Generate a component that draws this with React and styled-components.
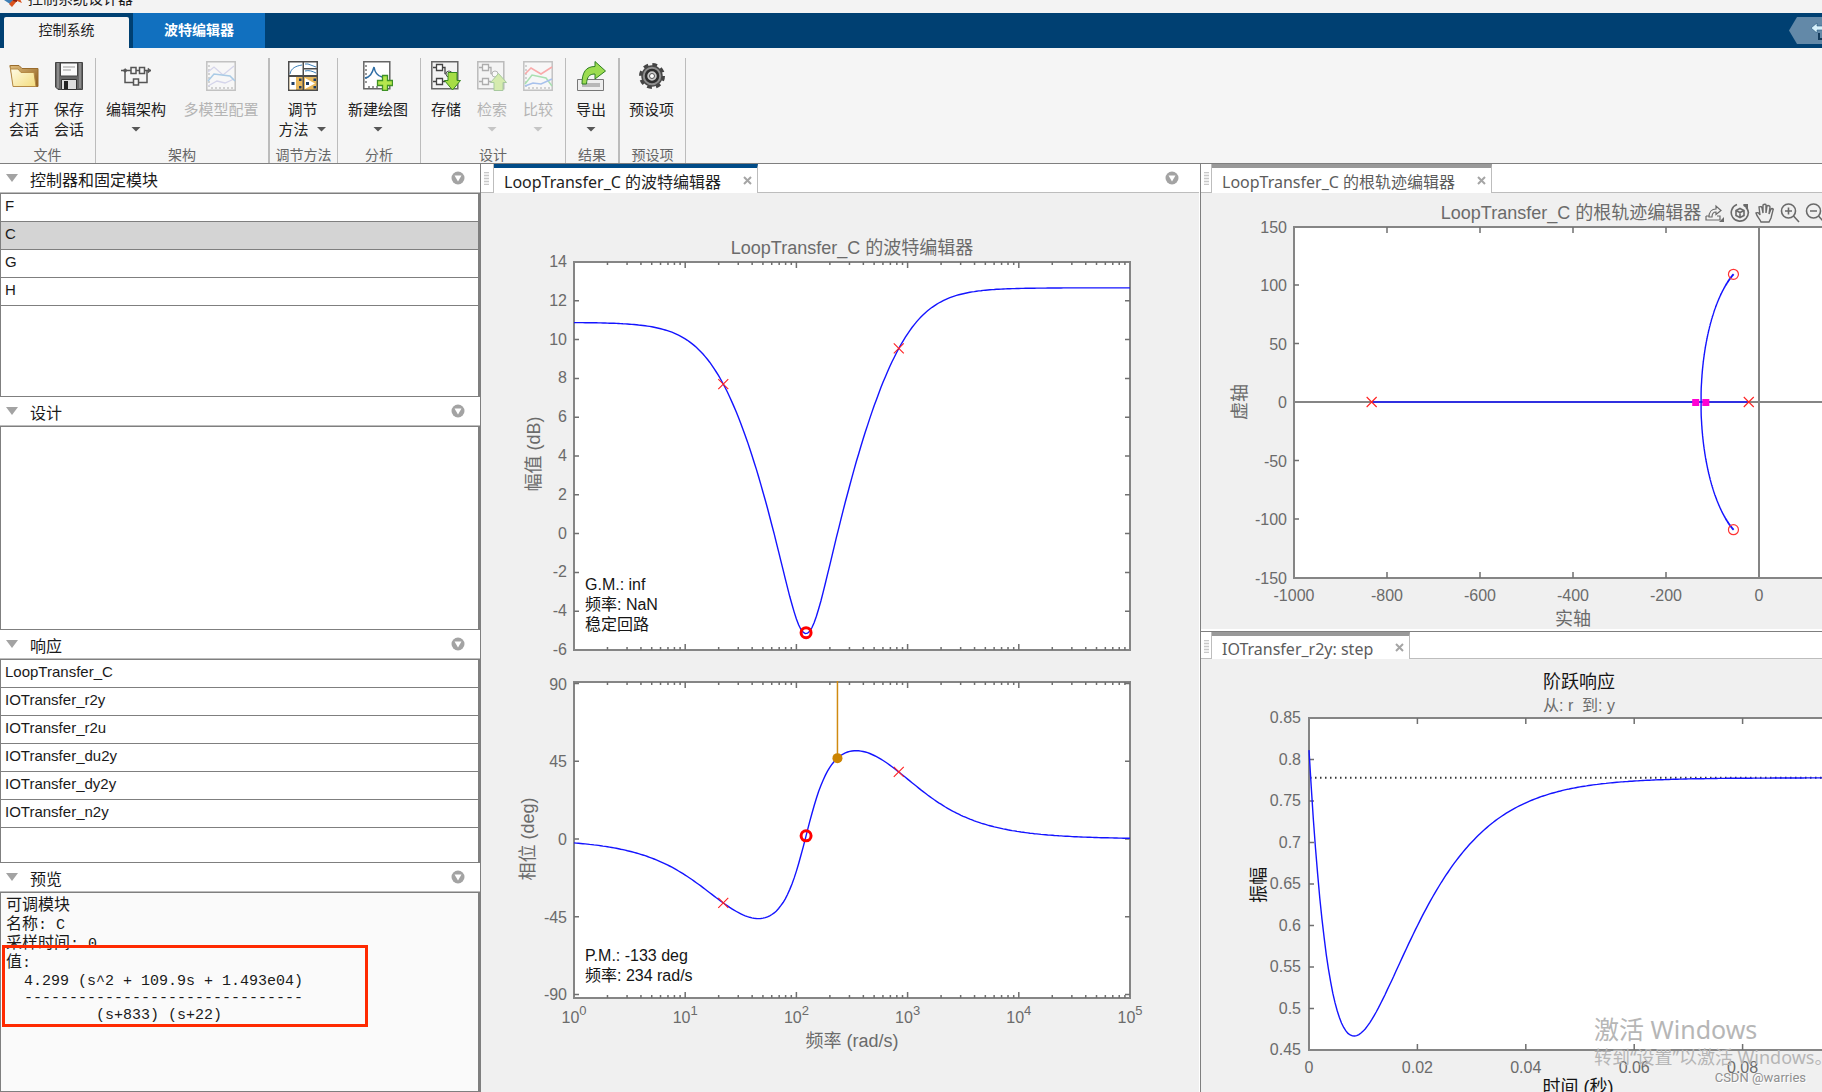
import React from 'react'
import styled, { createGlobalStyle } from 'styled-components'

const uiFont = '"Noto Sans", "Noto Sans CJK SC", sans-serif'
const plotFont = '"Liberation Sans", "Noto Sans CJK SC", sans-serif'

const GlobalStyle = createGlobalStyle`
    *, *::before, *::after {
        box-sizing: border-box;
    }
    body {
        margin: 0;
        overflow: hidden;
        background: #f0f0f0;
        font-family: ${uiFont};
        color: #1a1a1a;
    }
    button {
        border: 0;
        padding: 0;
        background: none;
        color: inherit;
        font: inherit;
    }
`

const Window = styled.div`
    display: flex;
    flex-direction: column;
    height: 100vh;
    overflow: hidden;
`

const TitleBar = styled.header`
    display: flex;
    align-items: flex-end;
    gap: 6px;
    height: 13px;
    padding: 0 4px 6px;
    overflow: hidden;
    background: #f3f3f3;
    font-size: 15px;
    line-height: 18px;
`

const TabStrip = styled.nav`
    display: flex;
    gap: 4px;
    height: 35px;
    padding-left: 4px;
    background: #004072;
`

const RibbonTab = styled.button`
    width: ${({ $active }) => ($active ? 125 : 132)}px;
    margin-top: ${({ $active }) => ($active ? 4 : 0)}px;
    padding-bottom: ${({ $active }) => ($active ? 6 : 2)}px;
    border-radius: ${({ $active }) => ($active ? '2px 2px 0 0' : 0)};
    background: ${({ $active }) => ($active ? '#f5f5f5' : '#1170bf')};
    color: ${({ $active }) => ($active ? '#222' : '#fff')};
    font-size: 14px;
    font-weight: ${({ $active }) => ($active ? 400 : 700)};
    line-height: 24px;
`

const QuickAccess = styled.button`
    width: 33px;
    height: 27px;
    margin: 4px 0 0 auto;
    padding-left: 22px;
    overflow: hidden;
    background: #6389a8;
    clip-path: polygon(0 50%, 8px 0, 100% 0, 100% 100%, 8px 100%);
    svg {
        display: block;
    }
`

const Ribbon = styled.div`
    display: flex;
    height: 116px;
    padding-top: 10px;
    border-bottom: 1px solid #7f7f7f;
    background: #f5f5f5;
`

const Section = styled.section`
    display: flex;
    flex-direction: column;
    width: ${({ $width }) => $width}px;
    padding-top: 3px;
    border-right: ${({ $thick }) => ($thick ? 2 : 1)}px solid #bcbcbc;
`

const SectionTools = styled.div`
    display: flex;
    flex: 1;
    justify-content: center;
    padding-right: 2px;
`

const SectionLabel = styled.div`
    color: #666;
    font-size: 14px;
    line-height: 16px;
    text-align: center;
    white-space: nowrap;
`

const Tool = styled.button`
    display: flex;
    flex-direction: column;
    flex: none;
    align-items: center;
    width: ${({ $width }) => $width}px;
    color: #222;
    font-size: 15px;
    line-height: 20px;
    white-space: nowrap;
    &:disabled {
        color: #b4b4b4;
    }
    > svg {
        width: 30px;
        height: 30px;
        margin-bottom: 8px;
    }
    &:disabled > svg {
        opacity: 0.4;
    }
`

const ToolLine = styled.span`
    display: flex;
    align-items: center;
    gap: 8px;
    height: 20px;
`

const Caret = styled.span`
    width: 10px;
    height: 5px;
    background: currentColor;
    opacity: 0.75;
    clip-path: polygon(0 0, 100% 0, 50% 100%);
`

const Workspace = styled.main`
    display: grid;
    flex: 1;
    grid-template-columns: 481px minmax(0, 719fr) minmax(0, 622fr);
    min-height: 0;
`

const Sidebar = styled.aside`
    display: flex;
    flex-direction: column;
    min-height: 0;
    border-right: 1px solid #7f7f7f;
    background: #fff;
`

const SidePanel = styled.section`
    display: flex;
    flex: ${({ $fill }) => ($fill ? '1 0 0' : '0 0 233px')};
    flex-direction: column;
    min-height: 0;
`

const SideHeader = styled.div`
    display: flex;
    align-items: center;
    gap: 12px;
    height: 29px;
    padding: 0 15px 0 6px;
    border-bottom: 1px solid #bdbdbd;
    button {
        display: flex;
    }
    h2 {
        flex: 1;
        margin: 0;
        padding-top: 3px;
        font-size: 16px;
        font-weight: 400;
        line-height: 24px;
    }
`

const SideBody = styled.div`
    position: relative;
    flex: 1;
    border: 1px solid #7f7f7f;
    border-right-width: 2px;
    background: ${({ $tinted }) => ($tinted ? '#fafafa' : '#fff')};
`

const ItemList = styled.ul`
    margin: 0;
    padding: 0;
    list-style: none;
`

const Item = styled.li`
    height: 28px;
    padding: 0 4px;
    border-bottom: 1px solid #7f7f7f;
    background: ${({ $selected }) => ($selected ? '#d4d4d4' : 'transparent')};
    font-family: ${plotFont};
    font-size: 15px;
    line-height: 24px;
`

const PreviewText = styled.pre`
    margin: 0;
    padding: 3px 5px;
    font-family: "Liberation Mono", "Noto Sans CJK SC", monospace;
    font-size: 15px;
    div {
        height: 19px;
        line-height: 21px;
    }
    b {
        font-size: 16px;
        font-weight: 400;
    }
    p {
        height: 17px;
        margin: 0;
        line-height: 19px;
    }
`

// highlight drawn over the preview text
const Highlight = styled.div`
    position: absolute;
    top: 52px;
    left: 1px;
    width: 366px;
    height: 82px;
    border: 3px solid #ff2a00;
`

const Dock = styled.section`
    display: flex;
    flex: ${({ $fill }) => ($fill ? '1 0 0' : '0 0 467px')};
    flex-direction: column;
    min-width: 0;
    min-height: 0;
    border-right: ${({ $divided }) => ($divided ? '1px solid #fff' : 0)};
    border-bottom: ${({ $stacked }) => ($stacked ? '2px solid #fff' : 0)};
    background: #f0f0f0;
`

const DockColumn = styled.div`
    display: flex;
    flex-direction: column;
    min-height: 0;
    border-left: 1px solid #7f7f7f;
`

const DockTabs = styled.div`
    display: flex;
    flex: none;
    height: ${({ $lower }) => ($lower ? 28 : 29)}px;
    border-top: ${({ $lower }) => ($lower ? '1px solid #7f7f7f' : 0)};
    background: #fff;
`

const Grip = styled.div`
    width: ${({ $narrow }) => ($narrow ? 11 : 13)}px;
    padding: 8px 0 0 3px;
    border-right: 1px solid #bdbdbd;
    border-bottom: 1px solid #bdbdbd;
    &::before {
        content: '';
        display: block;
        width: 5px;
        height: 13px;
        background: repeating-linear-gradient(#c8c8c8 0 1px, #efefef 1px 3px);
    }
`

const DockTab = styled.div`
    display: flex;
    align-items: center;
    gap: 22px;
    padding: 0 5px 0 10px;
    border-top: 4px solid ${({ $active }) => ($active ? '#004b87' : '#999')};
    border-right: 1px solid #bdbdbd;
    color: ${({ $active }) => ($active ? '#222' : '#5c5c5c')};
    font-size: 16px;
    line-height: 24px;
    white-space: nowrap;
    span {
        padding-top: 2px;
    }
    button {
        display: flex;
    }
`

const TabsRest = styled.div`
    display: flex;
    flex: 1;
    align-items: center;
    justify-content: flex-end;
    padding-right: 20px;
    border-bottom: 1px solid #bdbdbd;
    button {
        display: flex;
    }
`

const PlotArea = styled.div`
    position: relative;
    flex: 1;
    min-height: 0;
    overflow: hidden;
`

const PlotSvg = styled.svg`
    display: block;
    width: 100%;
    height: 100%;
    font-family: ${plotFont};
    font-size: 16px;
    fill: #6b6b6b;
    .frame {
        fill: #fff;
        stroke: #858585;
        stroke-width: 2;
    }
    .tick {
        fill: none;
        stroke: #707070;
    }
    .curve {
        fill: none;
        stroke: #1414ff;
        stroke-width: 1.4;
    }
    .label {
        font-size: 18px;
        text-anchor: middle;
    }
    .dark {
        fill: #151515;
    }
`

const AxesTools = styled.div`
    position: absolute;
    top: 10px;
    left: 504px;
    display: flex;
    gap: 5px;
    button {
        width: 20px;
        height: 20px;
    }
    svg {
        display: block;
        width: 20px;
        height: 20px;
        fill: none;
        stroke: #6a6a6a;
        stroke-width: 1.6;
    }
`

const Activation = styled.div`
    position: absolute;
    right: 0;
    bottom: 0;
    width: 228px;
    height: 80px;
    overflow: hidden;
    color: #b6b6b6;
    white-space: nowrap;
    pointer-events: none;
    strong {
        display: block;
        font-size: 25px;
        font-weight: 400;
        line-height: 34px;
    }
    span {
        display: block;
        font-size: 18px;
        line-height: 22px;
    }
    small {
        display: block;
        margin-right: 16px;
        color: #8f8f8f;
        font-family: Roboto, sans-serif;
        font-size: 13px;
        line-height: 20px;
        text-align: right;
        text-shadow: 1px 1px 0 #fff;
    }
`

/* ---------- icons ---------- */

const MatlabLogo = () => (
    <svg width='18' height='18' viewBox='0 0 18 18'>
        <path d='M0 11 6 8l4 3-4 4z' fill='#3f7fb5' />
        <path d='M6 8 12 0l3 8 3 6-5-2-5 6-3-3 4-4z' fill='#d9531e' />
        <path d='M12 0 9 12l4 1z' fill='#8c1d0c' />
    </svg>
)

const ShareIcon = () => (
    <svg width='26' height='27' viewBox='0 0 26 27'>
        <path d='M0 11l6-5v3h14v4H6v3z' fill='#d7f1fb' stroke='#2a5b80' strokeWidth='0.6' />
        <path d='M8 16v6h14' fill='none' stroke='#12395a' strokeWidth='2' />
    </svg>
)

const OpenIcon = () => (
    <svg viewBox='0 0 30 30'>
        <defs>
            <linearGradient id='folder' x1='0' y1='0' x2='1' y2='1'>
                <stop offset='0' stopColor='#fffef0' />
                <stop offset='1' stopColor='#f4dc7c' />
            </linearGradient>
            <linearGradient id='folderBack' x1='0' y1='0' x2='1' y2='1'>
                <stop offset='0' stopColor='#e0bd7c' />
                <stop offset='1' stopColor='#8a5a1c' />
            </linearGradient>
        </defs>
        <path d='M1 4.500h9l3 3h16v18H5z' fill='url(#folderBack)' stroke='#9a6c2c' />
        <path d='M1 4.500 4 25.500h23l-2-14H12l-3-3.500H2' fill='url(#folder)' stroke='#b58a45' />
    </svg>
)

const SaveIcon = () => (
    <svg viewBox='0 0 30 30'>
        <path d='M1.500 1.500h27v27H4l-2.500-2.500z' fill='#666' stroke='#444' />
        <path d='M3 2h2v25H3zM25 2h2v25h-2z' fill='#8b8b8b' />
        <path d='M6.500 2h17v13h-17z' fill='#fafafa' stroke='#444' />
        <path d='M9 6h12M9 9h8' stroke='#999' />
        <path d='M7.500 18.500h15v10h-15z' fill='#ddd' stroke='#333' />
        <path d='M10 20h4v8h-4z' fill='#222' />
    </svg>
)

const ArchitectureIcon = () => (
    <svg viewBox='0 0 30 30' fill='none' stroke='#555' strokeWidth='1.5'>
        <path d='M0 9.500h30M4 9.500v12h8M26 9.500v12h-8' />
        <path d='M10 6.500h5v6h-5zM18.500 6.500h5v6h-5zM12.500 18h5v6h-5z' fill='#f5f5f5' />
        <path d='M4 7.500 6.500 9.500 4 11.500 2 9.500zM30 9.500l-3-2.500v5z' fill='#555' strokeWidth='0.500' />
    </svg>
)

const ChartBase = ({ children }) => (
    <svg viewBox='0 0 30 30' fill='none'>
        <path d='M.8.8h28.400v28.400H.8z' fill='#fbfbfb' stroke='#777' strokeWidth='1.5' />
        <path d='M2 5h2M2 9h2M2 13h2M2 17h2M2 21h2M2 25h2M6 28v-2M10 28v-2M14 28v-2M18 28v-2M22 28v-2M26 28v-2' stroke='#444' />
        {children}
    </svg>
)

const MultiModelIcon = () => (
    <ChartBase>
        <path d='M2 11 8 6l9 8 11-9M2 25l9-5 8 2 9-4' stroke='#a6a6dc' strokeWidth='1.3' />
        <path d='M2 20 8 13l16 2 5 5' stroke='#3c8fd0' strokeWidth='1.5' />
    </ChartBase>
)

const CompareIcon = () => (
    <ChartBase>
        <path d='M2 13 8 7l10 6 11-7' stroke='#ff3b3b' strokeWidth='1.5' />
        <path d='M2 23 9 14l14 3 6 8' stroke='#3ac24e' strokeWidth='1.5' />
        <path d='M2 25l8-3 8 1 11-5' stroke='#3575e0' strokeWidth='1.5' />
    </ChartBase>
)

const TuningIcon = () => (
    <svg viewBox='0 0 30 30' fill='none'>
        <path d='M0 0h30v30H0z' fill='#4c4c4c' />
        <path d='M1.500 1.500h13v12.500h-13zM16 1.500h12.500v5.500H16zM16 8.500h12.500V14H16z' fill='#fff' />
        <path d='M1.500 16h13v12.500h-13zM16 16h12.500v12.500H16z' fill='#e9b85c' />
        <path d='M2 13c1-6 6-8 12-9M17 3h3l8 3M17 10c4-1 7 0 11 2' stroke='#3d7fb8' />
        <path d='M1.500 16H8v12.500H1.500zM17 17l10 5.500L17 28z' fill='#fff' />
        <path d='M3.500 21h3v3h-3zM11 17.500h2.500V20H11zM11 25h2.500v2.500H11zM18 21h3v3h-3zM25.500 17.500H28V20h-2.500zM25.500 25H28v2.500h-2.500z' fill='#1d3c66' />
    </svg>
)

const NewPlotIcon = () => (
    <svg viewBox='0 0 30 30' fill='none'>
        <path d='M.8.8h26v27H.8z' fill='#fff' stroke='#666' strokeWidth='1.5' />
        <path d='M2 5h2M2 9h2M2 13h2M2 17h2M2 21h2M6 27v-2M10 27v-2M14 27v-2' stroke='#333' />
        <path d='M2 17c5-1 7-4 9-11 1 6 3 9 8 10' stroke='#2e6da4' strokeWidth='1.5' />
        <path d='M19.500 14.500h5v5h5v5h-5v5h-5v-5h-5v-5h5z' fill='#b5e64e' stroke='#3f9226' strokeWidth='1.3' />
    </svg>
)

const DiagramBase = ({ children }) => (
    <svg viewBox='0 0 30 30' fill='none'>
        <path d='M.8.8h26v27H.8z' fill='#f3f3f3' stroke='#666' strokeWidth='1.5' />
        <path d='M2 6.500h12v6l8 3M2 20.500h12M11 4v6' stroke='#444' strokeWidth='1.3' />
        <path d='M5.500 3.500h6v6h-6zM5.500 17.500h6v6h-6z' fill='#fff' stroke='#444' strokeWidth='1.3' />
        <circle cx='18' cy='13' r='3' fill='#fff' stroke='#555' />
        {children}
    </svg>
)

const StoreIcon = () => (
    <DiagramBase>
        <path d='M17 11.500h9v8h3.500L21.500 29 13.500 19.500H17z' fill='#a6dd45' stroke='#378a20' />
    </DiagramBase>
)

const RetrieveIcon = () => (
    <DiagramBase>
        <path d='M17 29.500h9v-8h3.500L21.500 12.500 13.500 21.500H17z' fill='#a6dd45' stroke='#378a20' />
    </DiagramBase>
)

const ExportIcon = () => (
    <svg viewBox='0 0 30 30'>
        <path d='M1.500 18.500h26v11h-26z' fill='#eee' stroke='#777' />
        <path d='M6 22h18v4H6z' fill='#b8b8b8' />
        <path d='M6 23C6 11 10 5.500 19 5.500v-5l10.500 9.500L19 18v-5c-6 0-8 3-8.500 10z' fill='#9cdc50' stroke='#2f7f22' />
    </svg>
)

const GearIcon = () => (
    <svg viewBox='0 0 30 30'>
        <circle cx='15' cy='15' r='11' fill='none' stroke='#444' strokeWidth='4' strokeDasharray='4.600 4.039' />
        <circle cx='15' cy='15' r='10' fill='#8e8e8e' stroke='#484848' strokeWidth='1.5' />
        <circle cx='15' cy='15' r='6' fill='#c9c9c9' stroke='#2e2e2e' strokeWidth='2.500' />
        <circle cx='15' cy='15' r='2.500' fill='#fff' stroke='#555' />
    </svg>
)

const CollapseIcon = () => (
    <svg width='12' height='8' viewBox='0 0 12 8'>
        <path d='M0 0h12L6 8z' fill='#a3a3a3' />
    </svg>
)

const MenuIcon = () => (
    <svg width='14' height='14' viewBox='0 0 14 14'>
        <circle cx='7' cy='7' r='6.500' fill='#a3a3a3' />
        <path d='M3.500 4.500h7L7 10.500z' fill='#fff' />
    </svg>
)

const CloseIcon = () => (
    <svg width='9' height='9' viewBox='0 0 9 9'>
        <path d='M1 1l7 7M8 1 1 8' stroke='#a5a5a5' strokeWidth='2' />
    </svg>
)

/* ---------- data ---------- */

const sections = [
    {
        label: '文件',
        width: 96,
        tools: [
            { lines: ['打开', '会话'], icon: OpenIcon, width: 45 },
            { lines: ['保存', '会话'], icon: SaveIcon, width: 45 },
        ],
    },
    {
        label: '架构',
        width: 174,
        thick: true,
        tools: [
            { lines: ['编辑架构', ''], icon: ArchitectureIcon, width: 80, caret: true },
            { lines: ['多模型配置'], icon: MultiModelIcon, width: 90, disabled: true },
        ],
    },
    { label: '调节方法', width: 68, tools: [{ lines: ['调节', '方法'], icon: TuningIcon, width: 66, caret: true }] },
    { label: '分析', width: 83, tools: [{ lines: ['新建绘图', ''], icon: NewPlotIcon, width: 80, caret: true }] },
    {
        label: '设计',
        width: 145,
        tools: [
            { lines: ['存储'], icon: StoreIcon, width: 46 },
            { lines: ['检索', ''], icon: RetrieveIcon, width: 46, caret: true, disabled: true },
            { lines: ['比较', ''], icon: CompareIcon, width: 46, caret: true, disabled: true },
        ],
    },
    { label: '结果', width: 54, thick: true, tools: [{ lines: ['导出', ''], icon: ExportIcon, width: 50, caret: true }] },
    { label: '预设项', width: 66, tools: [{ lines: ['预设项'], icon: GearIcon, width: 60 }] },
]

const blocks = ['F', 'C', 'G', 'H']
const responses = [
    'LoopTransfer_C',
    'IOTransfer_r2y',
    'IOTransfer_r2u',
    'IOTransfer_du2y',
    'IOTransfer_dy2y',
    'IOTransfer_n2y',
]

// C(s) = gain (s^2 + b s + c) / ((s + p1)(s + p2))
const sys = { gain: 4.299, b: 109.9, c: 14930, p1: 833, p2: 22 }

const deg = (rad) => (rad * 180) / Math.PI

const magnitude = (w) => {
    const num = sys.gain * Math.hypot(sys.c - w * w, sys.b * w)
    const den = Math.hypot(sys.p1, w) * Math.hypot(sys.p2, w)
    return 20 * Math.log10(num / den)
}

const phase = (w) =>
    deg(Math.atan2(sys.b * w, sys.c - w * w) - Math.atan2(w, sys.p1) - Math.atan2(w, sys.p2))

const closedLoopRoots = (k) => {
    const a = 1 + k
    const b = (sys.p1 + sys.p2 + sys.b * k) / a
    const c = (sys.p1 * sys.p2 + sys.c * k) / a
    return { real: -b / 2, disc: (b * b) / 4 - c }
}

const stepResponse = (t) => {
    const { real, disc } = closedLoopRoots(sys.gain)
    const q1 = -real - Math.sqrt(disc)
    const q2 = -real + Math.sqrt(disc)
    const n = (s) => (sys.gain / (1 + sys.gain)) * (s * s + sys.b * s + sys.c)
    return (
        n(0) / (q1 * q2) -
        (n(-q1) / (q1 * (q2 - q1))) * Math.exp(-q1 * t) +
        (n(-q2) / (q2 * (q2 - q1))) * Math.exp(-q2 * t)
    )
}

const range = (n) => Array.from({ length: n }, (_, i) => i)
const toPoints = (list) => list.map(([x, y]) => `${x.toFixed(1)},${y.toFixed(1)}`).join(' ')

/* ---------- plots ---------- */

const Frame = ({ left, right, top, bottom, xTicks, yTicks, minor = [] }) => (
    <>
        <rect className='frame' x={left} y={top} width={right - left} height={bottom - top} />
        <path
            className='tick'
            strokeWidth='1.5'
            d={[
                ...xTicks.map((x) => `M${x} ${top}v6M${x} ${bottom}v-6`),
                ...yTicks.map((y) => `M${left} ${y}h5M${right} ${y}h-5`),
                ...minor.map((x) => `M${x} ${top}v3M${x} ${bottom}v-3`),
            ].join('')}
        />
    </>
)

const Cross = ({ x, y }) => (
    <path d={`M${x - 5} ${y - 5}l10 10M${x + 5} ${y - 5}l-10 10`} stroke='#f22' strokeWidth='1.1' />
)

const BodePlot = () => {
    const x = (w) => 93 + 111.2 * Math.log10(w)
    const yMag = (db) => 69 + (14 - db) * 19.4
    const yPhase = (p) => 646 - p * 1.727
    const freqs = range(251).map((i) => Math.pow(10, i / 50))
    const decades = range(6)
    const minor = range(5).flatMap((d) => range(8).map((m) => x((m + 2) * Math.pow(10, d))))
    const magTicks = range(11).map((i) => 14 - 2 * i)
    const phaseTicks = [90, 45, 0, -45, -90]
    const notch = Math.sqrt(sys.c)

    return (
        <PlotSvg viewBox='0 0 718 899' preserveAspectRatio='xMidYMin meet'>
            <text className='label' x='371' y='61'>LoopTransfer_C 的波特编辑器</text>
            <Frame left={93} right={649} top={69} bottom={457} xTicks={decades.slice(1, 5).map((d) => x(Math.pow(10, d)))} yTicks={magTicks.slice(1, -1).map(yMag)} minor={minor} />
            {magTicks.map((t) => (
                <text key={t} x='86' y={yMag(t) + 5} textAnchor='end'>{t}</text>
            ))}
            <polyline className='curve' points={toPoints(freqs.map((w) => [x(w), yMag(magnitude(w))]))} />
            <Cross x={x(22)} y={yMag(magnitude(22))} />
            <Cross x={x(833)} y={yMag(magnitude(833))} />
            <circle cx={x(notch)} cy={yMag(magnitude(notch)) - 1} r='5' fill='none' stroke='#f00' strokeWidth='3' />
            <text className='label' transform='translate(59 261) rotate(-90)'>幅值 (dB)</text>
            <text className='dark' x='104' y='397'>G.M.: inf</text>
            <text className='dark' x='104' y='417'>频率: NaN</text>
            <text className='dark' x='104' y='437'>稳定回路</text>

            <Frame left={93} right={649} top={489} bottom={805} xTicks={decades.slice(1, 5).map((d) => x(Math.pow(10, d)))} yTicks={phaseTicks.map(yPhase)} minor={minor} />
            {phaseTicks.map((t) => (
                <text key={t} x='86' y={yPhase(t) + 6} textAnchor='end'>{t}</text>
            ))}
            <polyline className='curve' points={toPoints(freqs.map((w) => [x(w), yPhase(phase(w))]))} />
            <Cross x={x(22)} y={yPhase(phase(22))} />
            <Cross x={x(833)} y={yPhase(phase(833))} />
            <path d={`M${x(234)} 488V${yPhase(phase(234))}`} stroke='#d08a10' strokeWidth='1.5' />
            <circle cx={x(234)} cy={yPhase(phase(234))} r='5' fill='#cc8400' />
            <circle cx={x(notch)} cy={yPhase(phase(notch))} r='5' fill='none' stroke='#f00' strokeWidth='3' />
            <text className='label' transform='translate(53 646) rotate(-90)'>相位 (deg)</text>
            <text className='dark' x='104' y='768'>P.M.: -133 deg</text>
            <text className='dark' x='104' y='788'>频率: 234 rad/s</text>

            {decades.map((d) => (
                <text key={d} x={x(Math.pow(10, d))} y='830' textAnchor='middle'>
                    10<tspan dy='-8' fontSize='13'>{d}</tspan>
                </text>
            ))}
            <text className='label' x='371' y='854'>频率 (rad/s)</text>
        </PlotSvg>
    )
}

const RootLocusPlot = () => {
    const x = (re) => 558 + re * 0.465
    const y = (im) => 209 - im * 1.17
    const xTicks = [-1000, -800, -600, -400, -200, 0]
    const yTicks = [150, 100, 50, 0, -50, -100, -150]
    const branch = range(1200)
        .map((i) => closedLoopRoots(4.2 * Math.pow(1.006, i)))
        .filter((r) => r.disc < 0)
        .map((r) => [r.real, Math.sqrt(-r.disc)])
    const upper = branch.map(([re, im]) => [x(re), y(im)])
    const lower = branch.map(([re, im]) => [x(re), y(-im)])
    const zeroIm = Math.sqrt(sys.c - (sys.b * sys.b) / 4)
    const { real, disc } = closedLoopRoots(sys.gain)

    return (
        <PlotSvg viewBox='0 0 621 436' preserveAspectRatio='xMinYMin slice'>
            <text className='label' x='370' y='26'>LoopTransfer_C 的根轨迹编辑器</text>
            <Frame left={93} right={651} top={34} bottom={385} xTicks={xTicks.slice(1).map(x)} yTicks={yTicks.slice(1, -1).map(y)} />
            <path d={`M93 ${y(0)}H651M${x(0)} 34V385`} stroke='#858585' strokeWidth='2' />
            {yTicks.map((t) => (
                <text key={t} x='86' y={y(t) + 6} textAnchor='end'>{t}</text>
            ))}
            {xTicks.map((t) => (
                <text key={t} x={x(t)} y='408' textAnchor='middle'>{t}</text>
            ))}
            <path className='curve' strokeWidth='2' d={`M${x(-833)} ${y(0)}H${x(-22)}`} />
            <polyline className='curve' points={toPoints([...upper.reverse(), ...lower])} />
            <Cross x={x(-833)} y={y(0)} />
            <Cross x={x(-22)} y={y(0)} />
            {[1, -1].map((s) => (
                <React.Fragment key={s}>
                    <circle cx={x(-sys.b / 2)} cy={y(s * zeroIm)} r='5' fill='none' stroke='#f33' strokeWidth='1.2' />
                    <rect x={x(real + s * Math.sqrt(disc)) - 3.5} y={y(0) - 3} width='7' height='7' fill='#ff00d4' />
                </React.Fragment>
            ))}
            <text className='label' x='372' y='432'>实轴</text>
            <text className='label' transform='translate(45 209) rotate(-90)'>虚轴</text>
        </PlotSvg>
    )
}

const StepPlot = () => {
    const x = (t) => 108 + t * 5420
    const y = (v) => 59 + (0.85 - v) * 830
    const xTicks = [0, 0.02, 0.04, 0.06, 0.08]
    const yTicks = [0.85, 0.8, 0.75, 0.7, 0.65, 0.6, 0.55, 0.5, 0.45]
    const curve = range(251).map((i) => [x(i * 0.0004), y(stepResponse(i * 0.0004))])

    return (
        <PlotSvg viewBox='0 0 621 433' preserveAspectRatio='xMinYMin slice'>
            <text className='label dark' x='378' y='29'>阶跃响应</text>
            <text x='378' y='52' textAnchor='middle' xmlSpace='preserve'>从: r  到: y</text>
            <Frame left={108} right={650} top={59} bottom={391} xTicks={xTicks.slice(1).map(x)} yTicks={yTicks.slice(1, -1).map(y)} />
            {yTicks.map((t) => (
                <text key={t} x='100' y={y(t) + 5} textAnchor='end'>{t}</text>
            ))}
            {xTicks.map((t) => (
                <text key={t} x={x(t)} y='414' textAnchor='middle'>{t}</text>
            ))}
            <path d={`M109 ${y(0.7779)}H650`} stroke='#333' strokeWidth='2' strokeDasharray='1.500 3.500' />
            <polyline className='curve' points={toPoints(curve)} />
            <text className='label dark' transform='translate(64 226) rotate(-90)'>振幅</text>
            <text className='label dark' x='377' y='434'>时间 (秒)</text>
        </PlotSvg>
    )
}

const PlotTools = () => (
    <AxesTools>
        <button aria-label='导出'>
            <svg viewBox='0 0 20 20'>
                <path d='M1 13v4h14v-4h-3M1 13h3M4 14c0-5 3-8 7-8V3l5 4.500-5 4V9c-3 0-4 2-4 5z' strokeWidth='1.2' />
                <path d='M19 14v5h-5z' fill='#6a6a6a' stroke='none' />
            </svg>
        </button>
        <button aria-label='三维旋转'>
            <svg viewBox='0 0 20 20'>
                <path d='M13.500 2A8.500 8.500 0 1 1 7 1.600M16 4.500A8.500 8.500 0 0 1 18.500 10' />
                <path d='M13 1h5v5z' fill='#6a6a6a' stroke='none' />
                <path d='M10 5.500l4 2v5l-4 2-4-2v-5zM6 7.500l4 2 4-2M10 9.500v5' />
            </svg>
        </button>
        <button aria-label='平移'>
            <svg viewBox='0 0 20 20'>
                <path d='M6 19c-1-3-4-5-5-9 2-1 3 0 4 2L4 4c2-1 3 0 3 1l1 5V2c1-1 3-1 3 0v8l1-7c1-1 3 0 3 1l-1 7 2-5c1-1 3 0 2 1l-2 8-2 4z' strokeWidth='1.4' />
            </svg>
        </button>
        <button aria-label='放大'>
            <svg viewBox='0 0 20 20'>
                <circle cx='8.500' cy='8' r='7' />
                <path d='M13.500 13l5.500 6M5 8h7M8.500 4.500v7' />
            </svg>
        </button>
        <button aria-label='缩小'>
            <svg viewBox='0 0 20 20'>
                <circle cx='8.500' cy='8' r='7' />
                <path d='M13.500 13l5.500 6M5 8h7' />
            </svg>
        </button>
    </AxesTools>
)

/* ---------- layout parts ---------- */

const RibbonTool = ({ lines, icon: Icon, width, caret, disabled }) => (
    <Tool $width={width} disabled={disabled}>
        <Icon />
        {lines.map((line, i) => (
            <ToolLine key={i}>
                {line}
                {caret && i === lines.length - 1 && <Caret />}
            </ToolLine>
        ))}
    </Tool>
)

const Panel = ({ title, fill, tinted, children }) => (
    <SidePanel $fill={fill}>
        <SideHeader>
            <button aria-label='折叠'><CollapseIcon /></button>
            <h2>{title}</h2>
            <button aria-label='面板菜单'><MenuIcon /></button>
        </SideHeader>
        <SideBody $tinted={tinted}>{children}</SideBody>
    </SidePanel>
)

const DockHeader = ({ title, active, narrow, lower, menu }) => (
    <DockTabs $lower={lower}>
        <Grip $narrow={narrow} />
        <DockTab $active={active}>
            <span>{title}</span>
            <button aria-label='关闭'><CloseIcon /></button>
        </DockTab>
        <TabsRest>{menu && <button aria-label='面板菜单'><MenuIcon /></button>}</TabsRest>
    </DockTabs>
)

const App = () => {
    return (
        <Window>
            <GlobalStyle />
            <TitleBar>
                <MatlabLogo />
                控制系统设计器
            </TitleBar>
            <TabStrip>
                <RibbonTab $active>控制系统</RibbonTab>
                <RibbonTab>波特编辑器</RibbonTab>
                <QuickAccess aria-label='快速访问'><ShareIcon /></QuickAccess>
            </TabStrip>
            <Ribbon>
                {sections.map((section) => (
                    <Section key={section.label} $width={section.width} $thick={section.thick}>
                        <SectionTools>
                            {section.tools.map((tool) => (
                                <RibbonTool key={tool.lines[0]} {...tool} />
                            ))}
                        </SectionTools>
                        <SectionLabel>{section.label}</SectionLabel>
                    </Section>
                ))}
            </Ribbon>
            <Workspace>
                <Sidebar>
                    <Panel title='控制器和固定模块'>
                        <ItemList>
                            {blocks.map((name) => (
                                <Item key={name} $selected={name === 'C'}>{name}</Item>
                            ))}
                        </ItemList>
                    </Panel>
                    <Panel title='设计' />
                    <Panel title='响应'>
                        <ItemList>
                            {responses.map((name) => (
                                <Item key={name}>{name}</Item>
                            ))}
                        </ItemList>
                    </Panel>
                    <Panel title='预览' fill tinted>
                        <PreviewText>
                            <div><b>可调模块</b></div>
                            <div><b>名称</b>: C</div>
                            <div><b>采样时间</b>: 0</div>
                            <div><b>值</b>:</div>
                            <p>{'  4.299 (s^2 + 109.9s + 1.493e04)'}</p>
                            <p>{'  ' + '-'.repeat(31)}</p>
                            <p>{'          (s+833) (s+22)'}</p>
                        </PreviewText>
                        <Highlight />
                    </Panel>
                </Sidebar>
                <Dock $fill $divided>
                    <DockHeader title='LoopTransfer_C 的波特编辑器' active menu />
                    <PlotArea>
                        <BodePlot />
                    </PlotArea>
                </Dock>
                <DockColumn>
                    <Dock $stacked>
                        <DockHeader title='LoopTransfer_C 的根轨迹编辑器' narrow />
                        <PlotArea>
                            <RootLocusPlot />
                            <PlotTools />
                        </PlotArea>
                    </Dock>
                    <Dock $fill>
                        <DockHeader title='IOTransfer_r2y: step' narrow lower />
                        <PlotArea>
                            <StepPlot />
                        </PlotArea>
                    </Dock>
                </DockColumn>
            </Workspace>
            <Activation>
                <strong>激活 Windows</strong>
                <span>转到“设置”以激活 Windows。</span>
                <small>CSDN @warries</small>
            </Activation>
        </Window>
    )
}

export default App
